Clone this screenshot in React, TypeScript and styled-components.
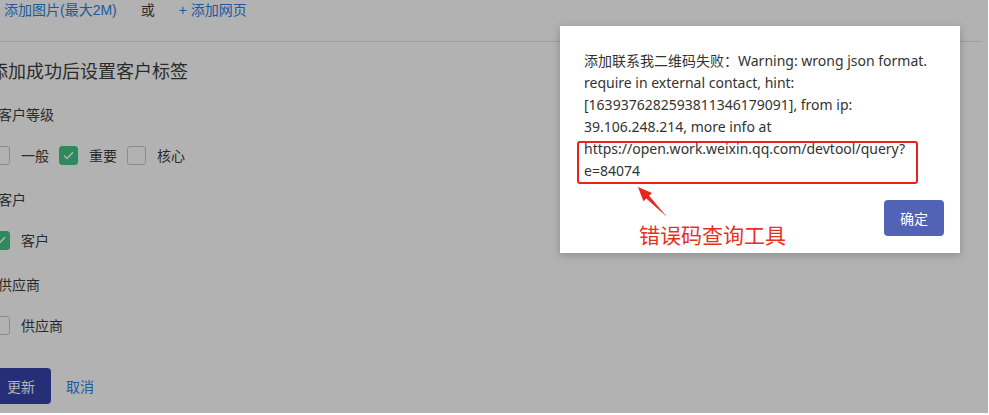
import React from "react";
import styled, { createGlobalStyle } from "styled-components";

const GlobalStyle = createGlobalStyle`
  html, body { margin: 0; padding: 0; background: #ffffff; }
  body { font-family: "Liberation Sans", "Noto Sans CJK SC", sans-serif; }
  * { box-sizing: border-box; }
`;

const Page = styled.div`
  position: relative;
  width: 988px;
  height: 413px;
  overflow: hidden;
  background: #ffffff;
  font-family: "Liberation Sans", "Noto Sans CJK SC", sans-serif;
`;

const Form = styled.div`
  margin-left: -9px;
  width: 990px;
`;

const TopBar = styled.div`
  display: flex;
  align-items: center;
  height: 42px;
  padding: 0 0 22px 13px;
  border-bottom: 1px solid #e2e2e2;
  font-size: 14px;
  line-height: 20px;
`;

const Link = styled.a`
  color: #2c82df;
  text-decoration: none;
  font-size: 14px;
  cursor: pointer;
`;

const Or = styled.span`
  color: #3d3d3d;
  margin: 0 24px 0 24px;
`;

const Title = styled.h3`
  margin: 17px 0 20px -1px;
  font-size: 18px;
  line-height: 26px;
  font-weight: normal;
  color: #3d3d3d;
`;

const Group = styled.div`
  margin-bottom: 25px;
`;

const GroupLabel = styled.div`
  margin-left: 7px;
  font-size: 14px;
  line-height: 20px;
  color: #3d3d3d;
  margin-bottom: 20px;
`;

const Options = styled.div`
  display: flex;
  align-items: center;
  height: 20px;
`;

const Option = styled.label`
  display: flex;
  align-items: center;
  margin-right: 10px;
  font-size: 14px;
  color: #3d3d3d;
`;

const Box = styled.span<{ $checked?: boolean }>`
  width: 19px;
  height: 19px;
  border-radius: 3px;
  border: 1px solid ${(p) => (p.$checked ? "#43c586" : "#c8c8c8")};
  background: ${(p) => (p.$checked ? "#43c586" : "#ffffff")};
  display: flex;
  align-items: center;
  justify-content: center;
  margin-right: 11px;
`;

const Actions = styled.div`
  display: flex;
  align-items: center;
  margin-top: 33px;
  gap: 15px;
`;

const PrimaryButton = styled.button`
  width: 60px;
  height: 36px;
  border: none;
  border-radius: 4px;
  background: #3643ab;
  color: #ffffff;
  font-size: 14px;
  font-family: inherit;
`;

const Overlay = styled.div`
  position: absolute;
  inset: 0;
  background: rgba(0, 0, 0, 0.3);
`;

const Dialog = styled.div`
  position: absolute;
  left: 560px;
  top: 26px;
  width: 400px;
  padding: 24px 16px 17px 24px;
  background: #ffffff;
  box-shadow: 0 2px 8px rgba(0, 0, 0, 0.22);
`;

const Message = styled.div`
  font-family: "Noto Sans", "Noto Sans CJK SC", sans-serif;
  font-size: 14px;
  line-height: 22px;
  color: #333333;
`;

const Line = styled.div`
  white-space: nowrap;
  height: 22px;
`;

const Footer = styled.div`
  display: flex;
  justify-content: flex-end;
  margin-top: 18px;
`;

const ConfirmButton = styled.button`
  width: 60px;
  height: 36px;
  border: none;
  border-radius: 4px;
  background: #5262b4;
  color: #ffffff;
  font-size: 14px;
  font-family: inherit;
`;

const Highlight = styled.div`
  position: absolute;
  left: 17px;
  top: 115px;
  width: 341px;
  height: 43px;
  border: 2px solid #e7231b;
  border-radius: 3px;
`;

const ArrowMark = styled.svg`
  position: absolute;
  left: 70px;
  top: 155px;
`;

const Note = styled.div`
  position: absolute;
  left: 79px;
  top: 196px;
  font-size: 21px;
  line-height: 25px;
  color: #e8301f;
  font-family: "Noto Sans CJK SC", sans-serif;
  white-space: nowrap;
`;

const Check = () => (
  <svg width="11" height="9" viewBox="0 0 11 9">
    <path d="M1 4.5 L4 7.5 L10 1.2" fill="none" stroke="#ffffff" strokeWidth="1.5" />
  </svg>
);

const CheckItem = ({ label, checked }: { label: string; checked?: boolean }) => (
  <Option>
    <Box $checked={checked}>{checked && <Check />}</Box>
    {label}
  </Option>
);

export default function App() {
  return (
    <>
      <GlobalStyle />
      <Page>
        <Form>
          <TopBar>
            <Link>添加图片(最大2M)</Link>
            <Or>或</Or>
            <Link>+ 添加网页</Link>
          </TopBar>
          <Title>添加成功后设置客户标签</Title>
          <Group>
            <GroupLabel>客户等级</GroupLabel>
            <Options>
              <CheckItem label="一般" />
              <CheckItem label="重要" checked />
              <CheckItem label="核心" />
            </Options>
          </Group>
          <Group>
            <GroupLabel>客户</GroupLabel>
            <Options>
              <CheckItem label="客户" checked />
            </Options>
          </Group>
          <Group>
            <GroupLabel>供应商</GroupLabel>
            <Options>
              <CheckItem label="供应商" />
            </Options>
          </Group>
          <Actions>
            <PrimaryButton>更新</PrimaryButton>
            <Link>取消</Link>
          </Actions>
        </Form>
        <Overlay />
        <Dialog>
          <Message>
            <Line>添加联系我二维码失败：Warning: wrong json format.</Line>
            <Line>require in external contact, hint:</Line>
            <Line>[1639376282593811346179091], from ip:</Line>
            <Line>39.106.248.214, more info at</Line>
            <Line>https://open.work.weixin.qq.com/devtool/query?</Line>
            <Line>e=84074</Line>
          </Message>
          <Footer>
            <ConfirmButton>确定</ConfirmButton>
          </Footer>
          <Highlight />
          <ArrowMark width="45" height="45" viewBox="0 0 45 45">
            <polygon points="8,6 22,11.9 19.1,14.7 37,36 16.3,17.5 13.4,20.3" fill="#e8261c" />
          </ArrowMark>
          <Note>错误码查询工具</Note>
        </Dialog>
      </Page>
    </>
  );
}
